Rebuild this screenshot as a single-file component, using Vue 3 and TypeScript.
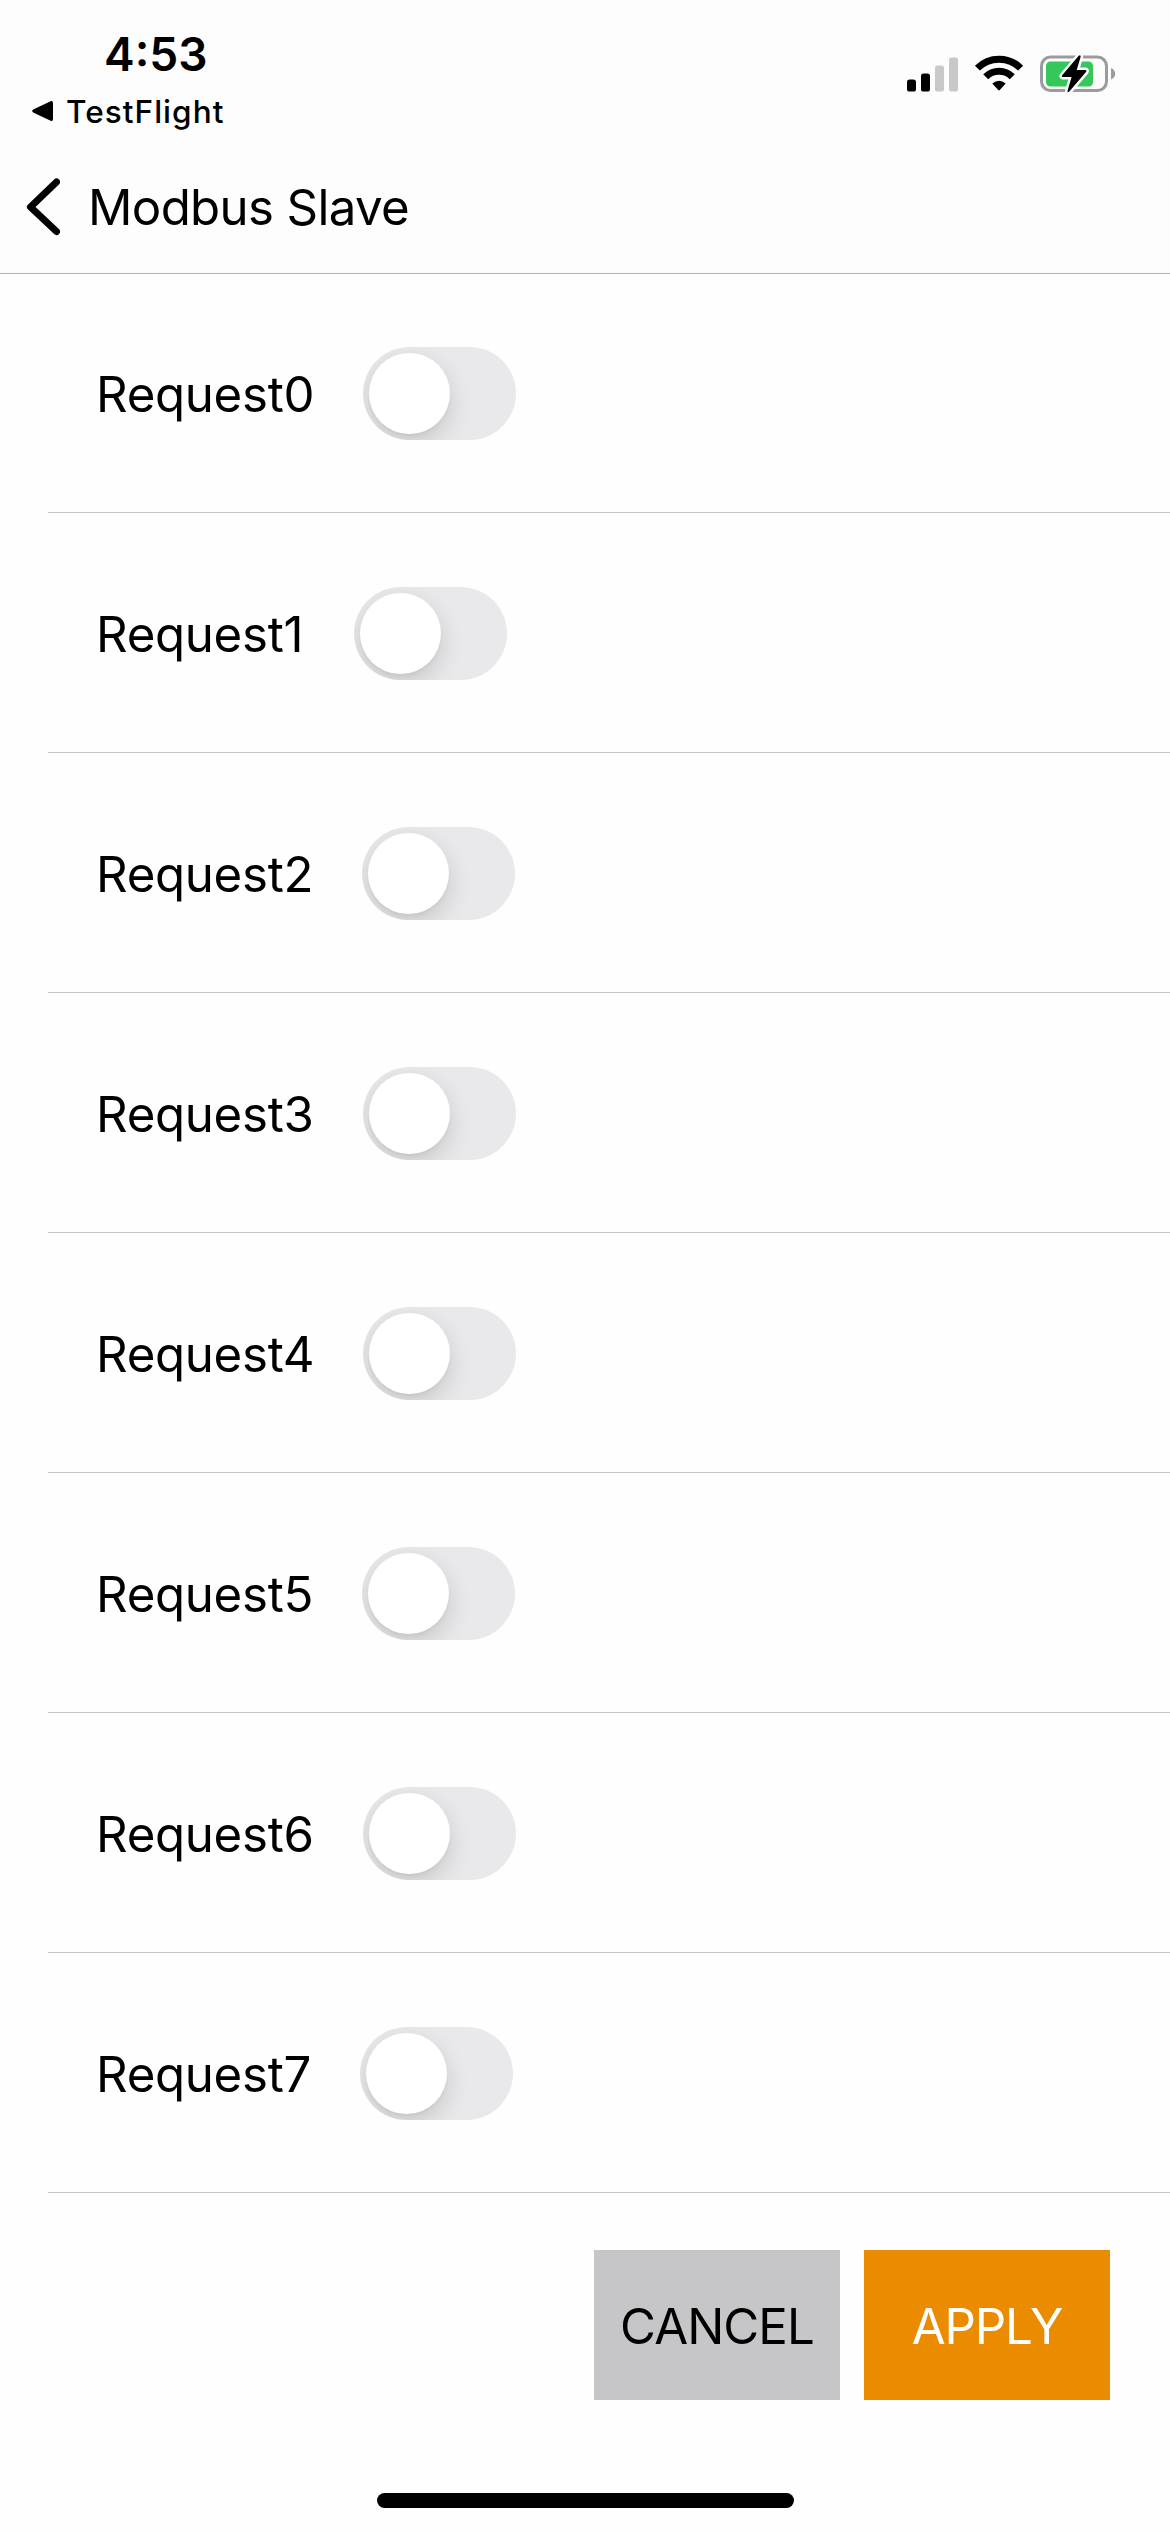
<script setup lang="ts">
import { ref } from 'vue'

interface RequestItem {
  label: string
  labelWidth: number
  enabled: boolean
}

const requests = ref<RequestItem[]>([
  { label: 'Request0', labelWidth: 219, enabled: false },
  { label: 'Request1', labelWidth: 210, enabled: false },
  { label: 'Request2', labelWidth: 218, enabled: false },
  { label: 'Request3', labelWidth: 219, enabled: false },
  { label: 'Request4', labelWidth: 219, enabled: false },
  { label: 'Request5', labelWidth: 218, enabled: false },
  { label: 'Request6', labelWidth: 219, enabled: false },
  { label: 'Request7', labelWidth: 216, enabled: false },
])
</script>

<template>
  <div class="screen">
    <header class="header">
      <div class="status">
        <div class="status-left">
          <div class="time">4:53</div>
          <div class="back-app">
            <svg width="22" height="22" viewBox="0 0 22 22">
              <path d="M1.2 9.4 18.6 1.3Q21 .5 21 3V19Q21 21.5 18.6 20.7L1.2 12.6Q-.8 11 1.2 9.4Z" />
            </svg>
            <span class="back-label">TestFlight</span>
          </div>
        </div>
        <div class="status-icons">
          <svg class="signal" width="52" height="35" viewBox="0 0 52 35">
            <rect x="0" y="22.5" width="9" height="12" rx="2.6" />
            <rect x="14" y="16.5" width="9" height="18" rx="2.6" />
            <rect x="28" y="8.5" width="9" height="26" rx="2.6" fill="#c8c8c8" />
            <rect x="42" y="0.5" width="9" height="34" rx="2.6" fill="#c8c8c8" />
          </svg>
          <svg class="wifi" width="50" height="38" viewBox="0 0 50 38">
            <g fill="none" stroke="#000" stroke-width="7">
              <path d="M3.4 14.1A30.5 30.5 0 0 1 46.6 14.1" />
              <path d="M11.7 22.7A18.8 18.8 0 0 1 38.3 22.7" />
            </g>
            <path d="M18.3 29.4Q25 24 31.7 29.4L25.8 36Q25 36.9 24.2 36Z" />
          </svg>
          <svg class="battery" width="78" height="42" viewBox="0 0 78 42">
            <rect x="1.5" y="4" width="65" height="33.5" rx="9" fill="none" stroke="#9b9b9e" stroke-width="3" />
            <path d="M71 15Q75.2 17 75.2 20.7T71 26.5Z" fill="#9b9b9e" />
            <rect x="6" y="8.5" width="47" height="25" rx="4.5" fill="#34c759" />
            <path
              d="M38.7 2.8Q41 1.4 40.6 4L36.7 17H45.6Q47.3 17.3 46 19L29.3 38.5Q27 40.4 27.6 37.5L31.6 24H22.8Q21 23.7 22.4 22Z"
              stroke="#fdfdfd" stroke-width="5" stroke-linejoin="round" paint-order="stroke"
            />
          </svg>
        </div>
      </div>
      <nav class="nav">
        <svg width="34" height="58" viewBox="0 0 34 58">
          <path d="M30.5 4 4.5 29 30.5 53.5" fill="none" stroke="#000" stroke-width="7" stroke-linecap="round" stroke-linejoin="round" />
        </svg>
        <h1 class="title">Modbus Slave</h1>
      </nav>
    </header>

    <main class="list">
      <div v-for="item in requests" :key="item.label" class="row">
        <span class="label" :style="{ width: item.labelWidth + 'px' }">{{ item.label }}</span>
        <button
          class="toggle"
          :class="{ on: item.enabled }"
          role="switch"
          :aria-checked="item.enabled"
          :aria-label="item.label"
          @click="item.enabled = !item.enabled"
        >
          <span class="knob"></span>
        </button>
      </div>
    </main>

    <footer class="actions">
      <button class="action cancel">CANCEL</button>
      <button class="action apply">APPLY</button>
    </footer>
    <div class="home-bar"></div>
  </div>
</template>

<style>
body {
  margin: 0;
  background: #fefefe;
}
</style>

<style scoped>
.screen {
  width: 1170px;
  height: 2532px;
  display: flex;
  flex-direction: column;
  overflow: hidden;
  background: #fefefe;
  color: #000;
  font-family: Inter, "Liberation Sans", sans-serif;
}
svg {
  display: block;
  flex: none;
}
.header {
  flex: none;
  height: 273px;
  background: #fdfdfd;
  box-shadow: 0 1px 0 #b3b3b3;
  position: relative;
}
.status {
  height: 141px;
  display: flex;
  justify-content: space-between;
}
.status-left {
  padding: 24px 0 0 32px;
}
.time {
  padding-left: 72px;
  height: 60px;
  line-height: 60px;
  font-size: 46px;
  font-weight: 600;
}
.back-app {
  height: 54px;
  display: flex;
  align-items: center;
  gap: 12px;
}
.back-label {
  font-size: 31.5px;
  font-weight: 500;
  letter-spacing: 1.05px;
}
.status-icons {
  display: flex;
  align-items: flex-start;
  padding: 53px 52px 0 0;
}
.signal {
  margin-top: 4px;
}
.wifi {
  margin: 1px 0 0 15px;
}
.battery {
  margin-left: 16px;
}
.nav {
  height: 132px;
  display: flex;
  align-items: center;
  gap: 28px;
  padding-left: 26px;
}
.title {
  margin: 0;
  font-size: 49.2px;
  font-weight: 400;
  letter-spacing: -0.65px;
  white-space: nowrap;
}
.list {
  flex: none;
}
.row {
  box-sizing: border-box;
  height: 240px;
  margin-left: 48px;
  padding: 2px 0 0 48px;
  border-bottom: 1px solid #c6c6c8;
  display: flex;
  align-items: center;
  gap: 48px;
}
.label {
  flex: none;
  font-size: 49.2px;
  letter-spacing: -0.3px;
  white-space: nowrap;
}
.toggle {
  flex: none;
  width: 153px;
  height: 93px;
  padding: 6px;
  border: 0;
  border-radius: 47px;
  background: #e9e9eb;
  overflow: hidden;
  display: flex;
}
.toggle.on {
  justify-content: flex-end;
  background: #34c759;
}
.knob {
  width: 81px;
  height: 81px;
  border-radius: 50%;
  background: #fff;
  box-shadow: 0 9px 24px rgba(0, 0, 0, 0.15), 0 3px 3px rgba(0, 0, 0, 0.03);
}
.actions {
  display: flex;
  justify-content: flex-end;
  gap: 24px;
  padding: 57px 60px 0 0;
}
.action {
  width: 246px;
  height: 150px;
  padding: 2px 0 0;
  border: 0;
  font: 400 49.2px Inter, "Liberation Sans", sans-serif;
  white-space: nowrap;
}
.cancel {
  background: #c6c6c8;
  color: #000;
  letter-spacing: -0.9px;
}
.apply {
  background: #eb8c00;
  color: #fff;
  letter-spacing: -1.2px;
}
.home-bar {
  width: 417px;
  height: 15px;
  margin: 93px auto 0;
  border-radius: 8px;
  background: #000;
}
</style>
